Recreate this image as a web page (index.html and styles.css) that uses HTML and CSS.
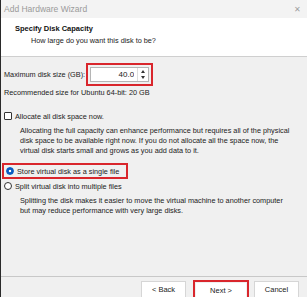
FILE: index.html
```html
<!DOCTYPE html>
<html lang="en">
<head>
    <meta charset="UTF-8">
    <title>Add Hardware Wizard</title>
    <link rel="stylesheet" href="styles.css">
</head>
<body>
    <div class="window">
        <div class="titlebar">
            <span class="title">Add Hardware Wizard</span>
            <span class="close">&#x2715;</span>
        </div>

        <div class="header">
            <h1>Specify Disk Capacity</h1>
            <p>How large do you want this disk to be?</p>
        </div>

        <div class="content">
            <div class="size-row">
                <label for="size">Maximum disk size (GB):</label>
                <div class="mark spin-mark">
                    <div class="spin">
                        <input type="text" id="size" value="40.0">
                        <div class="arrows">
                            <span class="up"></span>
                            <span class="down"></span>
                        </div>
                    </div>
                </div>
            </div>
            <p class="hint">Recommended size for Ubuntu 64-bit: 20 GB</p>

            <div class="option check-row">
                <span class="checkbox"></span>
                <span>Allocate all disk space now.</span>
            </div>
            <p class="desc">Allocating the full capacity can enhance performance but requires all of the physical disk space to be available right now. If you do not allocate all the space now, the virtual disk starts small and grows as you add data to it.</p>

            <div class="mark radio-mark">
                <div class="option">
                    <span class="radio checked"></span>
                    <span>Store virtual disk as a single file</span>
                </div>
            </div>
            <div class="option split-row">
                <span class="radio"></span>
                <span>Split virtual disk into multiple files</span>
            </div>
            <p class="desc">Splitting the disk makes it easier to move the virtual machine to another computer but may reduce performance with very large disks.</p>
        </div>

        <div class="footer">
            <button class="btn">&lt; Back</button>
            <div class="mark btn-mark"><button class="btn">Next &gt;</button></div>
            <button class="btn">Cancel</button>
        </div>
    </div>
</body>
</html>
```

FILE: styles.css
```css
* {
    margin: 0;
    padding: 0;
    box-sizing: border-box;
    font-family: 'Liberation Sans', Arial, sans-serif;
}

body {
    width: 307px;
    height: 297px;
    overflow: hidden;
    color: #222;
    font-size: 7.3px;
}

.window {
    height: 297px;
    display: flex;
    flex-direction: column;
    background: #f0f0f0;
    border-left: 1px solid #2a2a2a;
}

.titlebar {
    height: 18px;
    display: flex;
    align-items: center;
    justify-content: space-between;
    padding: 0 6px 0 3px;
    background: #f3f3f3;
}

.titlebar .title {
    font-size: 8.5px;
    color: #9a9a9a;
}

.titlebar .close {
    font-size: 8px;
    color: #a0a0a0;
}

.header {
    height: 39px;
    background: #fff;
    border-bottom: 1px solid #cfcfcf;
    padding: 6px 0 0 14px;
}

.header h1 {
    font-size: 7.5px;
    font-weight: bold;
    color: #111;
}

.header p {
    margin: 3px 0 0 16px;
}

.content {
    flex: 1;
    padding: 6px 0 0 3px;
}

.mark {
    border: 2px solid #d9262c;
}

.size-row {
    display: flex;
    align-items: center;
    gap: 1px;
}

.spin-mark {
    padding: 2px;
    width: 67px;
}

.spin {
    display: flex;
    background: #fff;
    border: 1px solid #b5b5b5;
    height: 15px;
}

.spin input {
    flex: 1;
    width: 0;
    border: none;
    text-align: right;
    font-size: 8px;
    padding-right: 3px;
    color: #222;
    background: transparent;
}

.arrows {
    width: 11px;
    display: flex;
    flex-direction: column;
    border-left: 1px solid #ddd;
}

.arrows span {
    flex: 1;
    position: relative;
}

.arrows .up::after, .arrows .down::after {
    content: '';
    position: absolute;
    left: 3px;
    top: 2px;
    border-left: 2.5px solid transparent;
    border-right: 2.5px solid transparent;
}

.arrows .up::after {
    border-bottom: 3px solid #333;
}

.arrows .down::after {
    top: 1px;
    border-top: 3px solid #333;
}

.hint {
    margin-top: 2px;
}

.option {
    display: flex;
    align-items: center;
    gap: 3px;
    height: 12px;
}

.check-row {
    margin-top: 13px;
}

.checkbox {
    width: 8px;
    height: 8px;
    border: 1px solid #333;
    border-radius: 1px;
    background: #fff;
}

.radio {
    width: 8px;
    height: 8px;
    border: 1px solid #333;
    border-radius: 50%;
    background: #fff;
}

.radio.checked {
    border-color: #0a5cc2;
    background: radial-gradient(circle, #fff 0 1.3px, #0a5cc2 1.6px);
}

.desc {
    margin: 4px 14px 0 16px;
    line-height: 10px;
}

.radio-mark {
    width: 126px;
    margin: 7px 0 0 -2px;
    padding-left: 2px;
}

.split-row {
    margin-top: 1px;
}

.footer {
    height: 21px;
    border-top: 1px solid #c8c8c8;
    display: flex;
    align-items: flex-end;
    justify-content: flex-end;
    padding-right: 8px;
}

.btn {
    width: 45px;
    height: 16px;
    border: 1px solid #d6d6d6;
    border-bottom: none;
    background: #fff;
    font-size: 7.5px;
    color: #222;
}

.btn-mark {
    width: 56px;
    border-bottom: none;
    padding: 1px 1px 0;
    margin: 0 5px 0 7px;
}

.btn-mark .btn {
    width: 100%;
    height: 14px;
    border: none;
}
```
